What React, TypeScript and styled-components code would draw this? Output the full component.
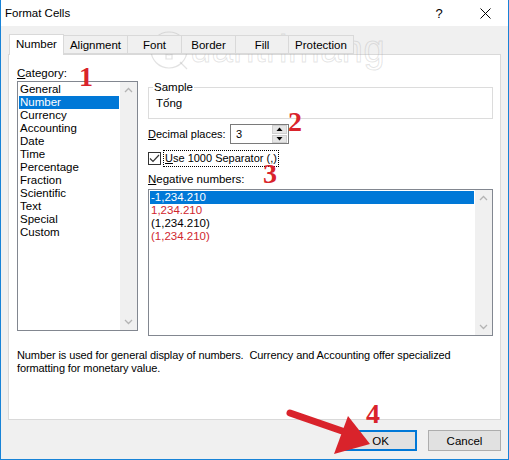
import * as React from "react";
import styled, { createGlobalStyle } from "styled-components";

const GlobalStyle = createGlobalStyle`
    html, body {
        margin: 0;
        padding: 0;
        background: #ffffff;
    }
    * {
        box-sizing: border-box;
    }
`;

const UI_FONT = `"Liberation Sans", Arial, sans-serif`;
const RED = "#d9232b";

const Window = styled.div`
    position: relative;
    width: 509px;
    height: 460px;
    display: flex;
    flex-direction: column;
    border: 1px solid #1883d7;
    border-top: none;
    font-family: ${UI_FONT};
    font-size: 11px;
    color: #000;
    overflow: hidden;
`;

const TitleBar = styled.div`
    height: 26px;
    flex: none;
    display: flex;
    align-items: center;
    background: #ffffff;
    padding-left: 4px;
    font-size: 11.5px;
`;

const Title = styled.div`
    flex: 1;
`;

const TitleButton = styled.div`
    width: 46px;
    height: 26px;
    display: flex;
    align-items: center;
    justify-content: center;
    font-size: 13px;
`;

const Body = styled.div`
    flex: 1;
    display: flex;
    flex-direction: column;
    background: #f0f0f0;
    padding: 7px 7px 0 7px;
`;

const TabStrip = styled.div`
    display: flex;
    align-items: flex-end;
    height: 21px;
    padding-left: 1px;
    position: relative;
    z-index: 1;
`;

const Tab = styled.div<{ $active?: boolean; $width: number }>`
    width: ${(p) => p.$width}px;
    height: ${(p) => (p.$active ? 21 : 19)}px;
    margin-bottom: ${(p) => (p.$active ? -1 : 0)}px;
    border: 1px solid #d9d9d9;
    border-bottom: ${(p) => (p.$active ? "none" : "1px solid #d9d9d9")};
    margin-left: ${(p) => (p.$active ? 0 : -1)}px;
    background: ${(p) => (p.$active ? "#ffffff" : "#f0f0f0")};
    display: flex;
    align-items: center;
    justify-content: center;
    font-size: 11.5px;
    padding-bottom: ${(p) => (p.$active ? 2 : 0)}px;
    &:first-child {
        margin-left: 0;
    }
`;

const Panel = styled.div`
    height: 366px;
    background: #ffffff;
    border: 1px solid #d9d9d9;
    display: flex;
    flex-direction: column;
    padding: 11px 7px 0 8px;
`;

const Columns = styled.div`
    display: flex;
    gap: 10px;
`;

const LeftColumn = styled.div`
    width: 121px;
    display: flex;
    flex-direction: column;
`;

const RightColumn = styled.div`
    width: 345px;
    display: flex;
    flex-direction: column;
`;

const Label = styled.div<{ $top?: number }>`
    height: 15px;
    line-height: 14px;
    margin-top: ${(p) => p.$top ?? 0}px;
    font-size: 11.5px;
    white-space: nowrap;
`;

const ListBox = styled.div<{ $height: number; $top?: number }>`
    height: ${(p) => p.$height}px;
    margin-top: ${(p) => p.$top ?? 0}px;
    border: 1px solid #828790;
    display: flex;
    background: #ffffff;
`;

const ListItems = styled.div`
    flex: 1;
    padding: 1px 1px 0 1px;
    display: flex;
    flex-direction: column;
`;

const ListItem = styled.div<{ $selected?: boolean; $red?: boolean }>`
    height: 13px;
    line-height: 13px;
    padding-left: 1px;
    font-size: 11.5px;
    white-space: nowrap;
    background: ${(p) => (p.$selected ? "#0078d7" : "transparent")};
    color: ${(p) => (p.$selected ? "#ffffff" : p.$red ? "#d0262e" : "#000000")};
`;

const ScrollBar = styled.div`
    width: 17px;
    background: #f0f0f0;
    display: flex;
    flex-direction: column;
    justify-content: space-between;
    align-items: center;
    padding: 5px 0 5px 0;
`;

const SampleGroup = styled.fieldset`
    margin: 15px 0 0 0;
    height: 38px;
    border: 1px solid #dcdcdc;
    padding: 0 0 0 7px;
    font-size: 11.5px;
    legend {
        padding: 0 1px;
        margin-left: -3px;
        line-height: 12px;
    }
`;

const SampleValue = styled.div`
    line-height: 14px;
    margin-top: 3px;
`;

const FieldRow = styled.div`
    display: flex;
    align-items: center;
    margin-top: 5px;
    height: 20px;
`;

const FieldLabel = styled.div`
    width: 82px;
    white-space: nowrap;
`;

const SpinBox = styled.div`
    width: 59px;
    height: 20px;
    border: 1px solid #7a7a7a;
    display: flex;
    align-items: center;
    padding-left: 5px;
`;

const SpinValue = styled.div`
    flex: 1;
`;

const SpinButtons = styled.div`
    width: 15px;
    height: 18px;
    display: flex;
    flex-direction: column;
    gap: 1px;
    margin-right: 1px;
`;

const SpinButton = styled.div`
    flex: 1;
    background: #e5e5e5;
    border: 1px solid #cfcfcf;
    display: flex;
    align-items: center;
    justify-content: center;
`;

const CheckRow = styled.div`
    display: flex;
    align-items: center;
    margin-top: 5px;
    height: 18px;
`;

const CheckBox = styled.div`
    width: 13px;
    height: 13px;
    border: 1px solid #333333;
    display: flex;
    align-items: center;
    justify-content: center;
    margin-right: 2px;
    background: #ffffff;
`;

const FocusLabel = styled.div`
    border: 1px dotted #000000;
    padding: 0 1px;
    line-height: 15px;
    white-space: nowrap;
`;

const Description = styled.div`
    margin-top: 13px;
    line-height: 13px;
    font-size: 11px;
    letter-spacing: -0.1px;
    width: 476px;
`;

const Footer = styled.div`
    flex: 1;
    display: flex;
    justify-content: flex-end;
    align-items: flex-start;
    gap: 11px;
    padding-top: 10px;
`;

const Button = styled.div<{ $default?: boolean }>`
    width: 73px;
    height: 21px;
    display: flex;
    align-items: center;
    justify-content: center;
    background: #e1e1e1;
    border: ${(p) => (p.$default ? "2px solid #0078d7" : "1px solid #adadad")};
    font-size: 11.5px;
`;

const Accel = styled.span`
    text-decoration: underline;
`;

const Marker = styled.div<{ $x: number; $y: number }>`
    position: absolute;
    left: ${(p) => p.$x}px;
    top: ${(p) => p.$y}px;
    font-family: "Liberation Serif", serif;
    font-weight: bold;
    font-size: 28px;
    line-height: 28px;
    color: ${RED};
`;

const Overlay = styled.svg`
    position: absolute;
    left: 0;
    top: 0;
    pointer-events: none;
`;

const Watermark = styled.div`
    position: absolute;
    left: 148px;
    top: 28px;
    display: flex;
    align-items: center;
    gap: 1px;
    pointer-events: none;
`;

const WatermarkText = styled.div`
    font-family: "Liberation Sans", sans-serif;
    font-size: 38px;
    letter-spacing: 0.5px;
    color: transparent;
    -webkit-text-stroke: 1px rgba(160, 160, 160, 0.28);
`;

const Chevron = ({ up }: { up?: boolean }) => (
    <svg width="9" height="6" viewBox="0 0 9 6">
        <path
            d={up ? "M1 5 L4.5 1.5 L8 5" : "M1 1 L4.5 4.5 L8 1"}
            fill="none"
            stroke="#b4b4b4"
            strokeWidth="1.3"
        />
    </svg>
);

const Triangle = ({ up }: { up?: boolean }) => (
    <svg width="7" height="4" viewBox="0 0 7 4">
        <path d={up ? "M0.5 4 L3.5 0.5 L6.5 4 Z" : "M0.5 0 L3.5 3.5 L6.5 0 Z"} fill="#000" />
    </svg>
);

const categories = [
    "General", "Number", "Currency", "Accounting", "Date", "Time", "Percentage",
    "Fraction", "Scientific", "Text", "Special", "Custom",
];

const negatives = [
    { text: "-1,234.210", red: false },
    { text: "1,234.210", red: true },
    { text: "(1,234.210)", red: false },
    { text: "(1,234.210)", red: true },
];

const tabs = [
    { name: "Number", width: 55 },
    { name: "Alignment", width: 65 },
    { name: "Font", width: 55 },
    { name: "Border", width: 55 },
    { name: "Fill", width: 54 },
    { name: "Protection", width: 66 },
];

export default function App() {
    return (
        <>
            <GlobalStyle />
            <Window>
                <TitleBar>
                    <Title>Format Cells</Title>
                    <TitleButton>?</TitleButton>
                    <TitleButton>
                        <svg width="11" height="11" viewBox="0 0 11 11">
                            <path d="M0.5 0.5 L10.5 10.5 M10.5 0.5 L0.5 10.5" stroke="#000" strokeWidth="1" />
                        </svg>
                    </TitleButton>
                </TitleBar>
                <Body>
                    <TabStrip>
                        {tabs.map((t, i) => (
                            <Tab key={t.name} $active={i === 0} $width={t.width}>
                                {t.name}
                            </Tab>
                        ))}
                    </TabStrip>
                    <Panel>
                        <Columns>
                            <LeftColumn>
                                <Label>
                                    <Accel>C</Accel>ategory:
                                </Label>
                                <ListBox $height={250}>
                                    <ListItems>
                                        {categories.map((c) => (
                                            <ListItem key={c} $selected={c === "Number"}>
                                                {c}
                                            </ListItem>
                                        ))}
                                    </ListItems>
                                    <ScrollBar>
                                        <Chevron up />
                                        <Chevron />
                                    </ScrollBar>
                                </ListBox>
                            </LeftColumn>
                            <RightColumn>
                                <SampleGroup>
                                    <legend>Sample</legend>
                                    <SampleValue>Tống</SampleValue>
                                </SampleGroup>
                                <FieldRow>
                                    <FieldLabel>
                                        <Accel>D</Accel>ecimal places:
                                    </FieldLabel>
                                    <SpinBox>
                                        <SpinValue>3</SpinValue>
                                        <SpinButtons>
                                            <SpinButton>
                                                <Triangle up />
                                            </SpinButton>
                                            <SpinButton>
                                                <Triangle />
                                            </SpinButton>
                                        </SpinButtons>
                                    </SpinBox>
                                </FieldRow>
                                <CheckRow>
                                    <CheckBox>
                                        <svg width="11" height="9" viewBox="0 0 11 9">
                                            <path d="M1 4.5 L4 7.5 L10 1" fill="none" stroke="#333" strokeWidth="1.2" />
                                        </svg>
                                    </CheckBox>
                                    <FocusLabel>
                                        <Accel>U</Accel>se 1000 Separator (,)
                                    </FocusLabel>
                                </CheckRow>
                                <Label $top={5}>
                                    <Accel>N</Accel>egative numbers:
                                </Label>
                                <ListBox $height={147} $top={2}>
                                    <ListItems>
                                        {negatives.map((n, i) => (
                                            <ListItem key={i} $selected={i === 0} $red={n.red}>
                                                {n.text}
                                            </ListItem>
                                        ))}
                                    </ListItems>
                                    <ScrollBar>
                                        <Chevron up />
                                        <Chevron />
                                    </ScrollBar>
                                </ListBox>
                            </RightColumn>
                        </Columns>
                        <Description>
                            Number is used for general display of numbers.&nbsp; Currency and Accounting offer specialized
                            formatting for monetary value.
                        </Description>
                    </Panel>
                    <Footer>
                        <Button $default>OK</Button>
                        <Button>Cancel</Button>
                    </Footer>
                </Body>

                <Watermark>
                    <svg width="40" height="42" viewBox="0 0 40 42">
                        <g fill="none" stroke="rgba(160,160,160,0.3)" strokeWidth="1.2">
                            <circle cx="20" cy="21" r="18" />
                            <circle cx="20" cy="19" r="7" />
                            <path d="M17 26 L17 30 L23 30 L23 26" />
                            <path d="M20 6 L20 9 M10 10 L12 12 M30 10 L28 12 M7 19 L10 19 M33 19 L30 19" />
                            <path d="M31 33 L38 40" />
                        </g>
                    </svg>
                    <WatermarkText>uantrimang</WatermarkText>
                </Watermark>

                <Marker $x={78} $y={63}>1</Marker>
                <Marker $x={287} $y={108}>2</Marker>
                <Marker $x={262} $y={160}>3</Marker>
                <Marker $x={365} $y={400}>4</Marker>

                <Overlay width="509" height="460" viewBox="0 0 509 460">
                    <path d="M289 413 L344 432" stroke={RED} strokeWidth="7" strokeLinecap="round" />
                    <path d="M347 416 L369 444 L333 454 Z" fill={RED} />
                </Overlay>
            </Window>
        </>
    );
}
